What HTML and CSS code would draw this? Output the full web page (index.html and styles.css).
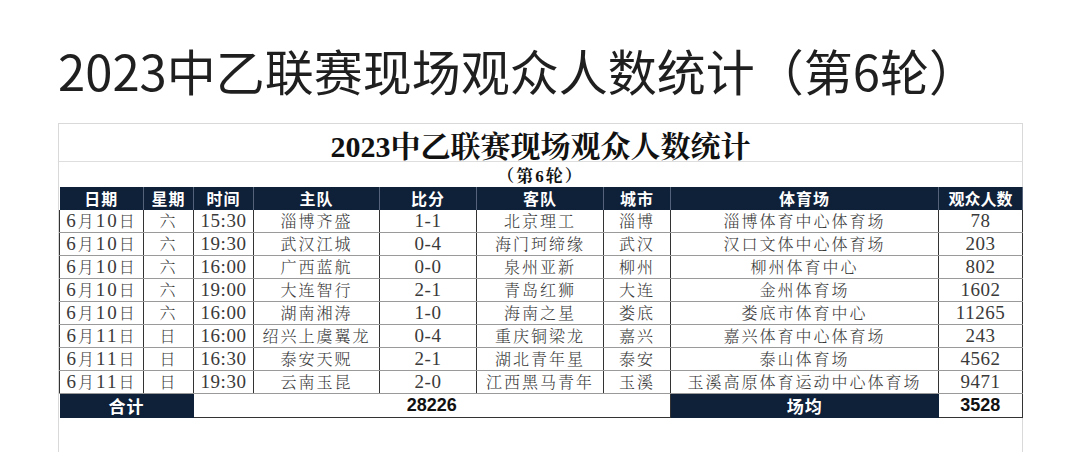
FILE: index.html
```html
<!DOCTYPE html>
<html lang="zh-CN">
<head>
<meta charset="utf-8">
<title>2023中乙联赛现场观众人数统计（第6轮）</title>
<link rel="stylesheet" href="styles.css">
</head>
<body>
<div class="page">
  <h1 class="headline">2023中乙联赛现场观众人数统计（第6轮）</h1>
  <div class="sheet">
    <div class="sheet-title">2023中乙联赛现场观众人数统计</div>
    <div class="sheet-sub">（第6轮）</div>
    <table class="grid">
      <colgroup>
        <col class="c-date"><col class="c-wd"><col class="c-time"><col class="c-home"><col class="c-score"><col class="c-away"><col class="c-city"><col class="c-venue"><col class="c-att">
      </colgroup>
      <thead>
        <tr><th>日期</th><th>星期</th><th>时间</th><th>主队</th><th>比分</th><th>客队</th><th>城市</th><th>体育场</th><th class="th-att">观众人数</th></tr>
      </thead>
      <tbody>
        <tr><td class="cj"><span class="n">6</span>月<span class="n">10</span>日</td><td class="cj">六</td><td class="num">15:30</td><td class="cj">淄博齐盛</td><td class="num">1-1</td><td class="cj">北京理工</td><td class="cj">淄博</td><td class="cj">淄博体育中心体育场</td><td class="num">78</td></tr>
        <tr><td class="cj"><span class="n">6</span>月<span class="n">10</span>日</td><td class="cj">六</td><td class="num">19:30</td><td class="cj">武汉江城</td><td class="num">0-4</td><td class="cj">海门珂缔缘</td><td class="cj">武汉</td><td class="cj">汉口文体中心体育场</td><td class="num">203</td></tr>
        <tr><td class="cj"><span class="n">6</span>月<span class="n">10</span>日</td><td class="cj">六</td><td class="num">16:00</td><td class="cj">广西蓝航</td><td class="num">0-0</td><td class="cj">泉州亚新</td><td class="cj">柳州</td><td class="cj">柳州体育中心</td><td class="num">802</td></tr>
        <tr><td class="cj"><span class="n">6</span>月<span class="n">10</span>日</td><td class="cj">六</td><td class="num">19:00</td><td class="cj">大连智行</td><td class="num">2-1</td><td class="cj">青岛红狮</td><td class="cj">大连</td><td class="cj">金州体育场</td><td class="num">1602</td></tr>
        <tr><td class="cj"><span class="n">6</span>月<span class="n">10</span>日</td><td class="cj">六</td><td class="num">16:00</td><td class="cj">湖南湘涛</td><td class="num">1-0</td><td class="cj">海南之星</td><td class="cj">娄底</td><td class="cj">娄底市体育中心</td><td class="num">11265</td></tr>
        <tr><td class="cj"><span class="n">6</span>月<span class="n">11</span>日</td><td class="cj">日</td><td class="num">16:00</td><td class="cj">绍兴上虞翼龙</td><td class="num">0-4</td><td class="cj">重庆铜梁龙</td><td class="cj">嘉兴</td><td class="cj">嘉兴体育中心体育场</td><td class="num">243</td></tr>
        <tr><td class="cj"><span class="n">6</span>月<span class="n">11</span>日</td><td class="cj">日</td><td class="num">16:30</td><td class="cj">泰安天贶</td><td class="num">2-1</td><td class="cj">湖北青年星</td><td class="cj">泰安</td><td class="cj">泰山体育场</td><td class="num">4562</td></tr>
        <tr><td class="cj"><span class="n">6</span>月<span class="n">11</span>日</td><td class="cj">日</td><td class="num">19:30</td><td class="cj">云南玉昆</td><td class="num">2-0</td><td class="cj">江西黑马青年</td><td class="cj">玉溪</td><td class="cj">玉溪高原体育运动中心体育场</td><td class="num">9471</td></tr>
      </tbody>
      <tfoot>
        <tr><td colspan="2" class="label">合计</td><td colspan="5" class="total">28226</td><td class="label">场均</td><td class="total">3528</td></tr>
      </tfoot>
    </table>
    <div class="sheet-blank"></div>
  </div>
</div>
</body>
</html>
```
FILE: styles.css
```css
html, body {
  margin: 0;
  padding: 0;
  background: #ffffff;
}
body {
  font-family: "Noto Sans CJK SC", "Noto Sans", sans-serif;
  color: #222;
  overflow: hidden;
}
.page {
  padding: 40px 0 0 58px;
  width: 965px;
}
.headline {
  margin: 0;
  font-family: "Noto Sans CJK SC", sans-serif;
  font-weight: 400;
  font-size: 49px;
  line-height: 60px;
  color: #1f1f1f;
  white-space: nowrap;
}
.sheet {
  margin-top: 23px;
  width: 965px;
  box-sizing: border-box;
  border: 1px solid #d9d9d9;
  border-bottom: none;
  display: flex;
  flex-direction: column;
}
.sheet-title {
  height: 38px;
  box-sizing: border-box;
  padding-top: 2px;
  border-bottom: 1px solid #dedede;
  display: flex;
  align-items: center;
  justify-content: center;
  font-family: "Liberation Serif", "Noto Serif CJK SC", "Noto Sans CJK SC", serif;
  font-weight: 700;
  font-size: 30px;
  color: #111;
}
.sheet-sub {
  height: 25px;
  display: flex;
  align-items: center;
  justify-content: center;
  font-family: "Liberation Serif", "Noto Serif CJK SC", "Noto Sans CJK SC", serif;
  font-weight: 700;
  font-size: 17px;
  letter-spacing: 2px;
  color: #111;
}
.grid {
  width: 100%;
  table-layout: fixed;
  border-collapse: collapse;
}
.c-date { width: 84px; }
.c-wd { width: 50px; }
.c-time { width: 60px; }
.c-home { width: 126px; }
.c-score { width: 97px; }
.c-away { width: 127px; }
.c-city { width: 67px; }
.c-venue { width: 268px; }
.c-att { width: 84px; }

.grid th {
  background: #0f2039;
  color: #fff;
  font-family: "Noto Sans CJK SC", sans-serif;
  font-weight: 700;
  font-size: 16px;
  height: 23px;
  padding: 0;
  line-height: 23px;
  border-left: 1px solid #55637a;
  border-right: 1px solid #55637a;
  letter-spacing: 1px;
}
.grid th:first-child { border-left: none; }
.grid th.th-att { letter-spacing: 0; }

.grid tbody td {
  height: 22px;
  padding: 0;
  text-align: center;
  line-height: 22px;
  color: #3a3a3a;
  border-left: 1px solid #333;
  border-right: 1px solid #333;
  border-bottom: 1.5px solid #9a9a9a;
  white-space: nowrap;
  overflow: hidden;
}
.grid td.cj {
  font-family: "Noto Serif CJK SC", "Noto Sans CJK SC", serif;
  font-weight: 300;
  font-size: 16px;
  letter-spacing: 2px;
}
.grid td.num {
  font-family: "Liberation Serif", serif;
  font-size: 19px;
  letter-spacing: 0.5px;
}
.grid .n {
  font-family: "Liberation Serif", serif;
  font-size: 19px;
  letter-spacing: 2px;
}

.grid tfoot td {
  height: 23px;
  padding: 0;
  text-align: center;
  line-height: 23px;
  font-family: "Noto Sans CJK SC", sans-serif;
  font-weight: 700;
  font-size: 17px;
}
.grid tfoot td.label {
  background: #0f2039;
  color: #fff;
  letter-spacing: 1px;
}
.grid tfoot td.total {
  color: #111;
  font-family: "Liberation Sans", "Noto Sans", sans-serif;
  font-size: 18px;
  border-right: 1px solid #333;
  border-bottom: 1px solid #333;
}
.sheet-blank {
  height: 34px;
}
```
